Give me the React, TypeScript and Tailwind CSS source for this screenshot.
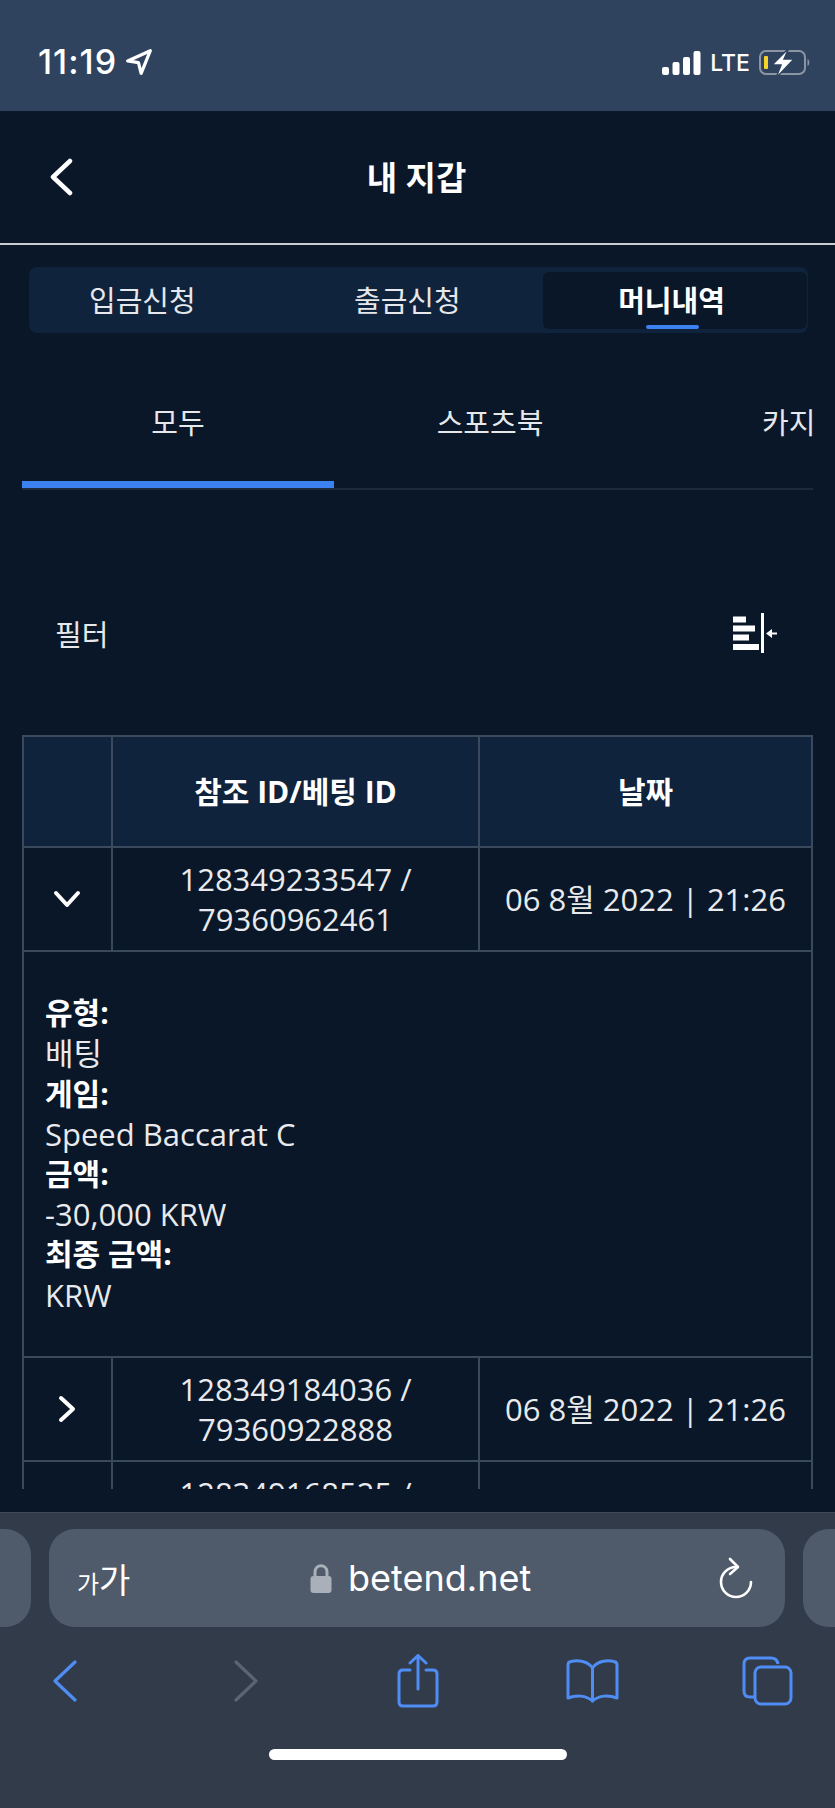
const KR = "font-['Open_Sans','Noto_Sans_CJK_KR',sans-serif]";

function StatusBar() {
  return (
    <div className="flex h-[111px] shrink-0 items-start justify-between bg-[#2f435f] pl-[38px] pr-[24px] pt-[42px] text-white">
      <div className="flex items-center gap-[8px]">
        <span className="font-['Inter',sans-serif] text-[34px] leading-[39px] font-medium tracking-[1px]">11:19</span>
        <svg width="28" height="28" viewBox="0 0 26 26" fill="none" stroke="#fff" strokeWidth="3" strokeLinejoin="round">
          <path d="M2.5 12 L23.5 2.5 L15 23.5 L12.5 13.5 Z" />
        </svg>
      </div>
      <div className="flex items-center gap-[9px] pt-[6px]">
        <svg width="39" height="25" viewBox="0 0 39 25" fill="#fff">
          <rect x="0" y="16" width="7" height="8" rx="2" />
          <rect x="10.5" y="11" width="7" height="13" rx="2" />
          <rect x="21" y="6" width="7" height="18" rx="2" />
          <rect x="31.5" y="0" width="7" height="24" rx="2" />
        </svg>
        <span className="font-['Inter',sans-serif] text-[23px] leading-[26px] font-medium">LTE</span>
        <svg width="52" height="30" viewBox="0 0 52 30" fill="none">
          <rect x="1" y="3" width="45" height="23" rx="6" stroke="#8b95a3" strokeWidth="2" />
          <path d="M48.5 11 C51 12 51 17 48.5 18 Z" fill="#8b95a3" />
          <rect x="5" y="8" width="4" height="13" rx="1" fill="#f5d327" />
          <path d="M30 0 L13 17 L22 17 L17 30 L35 11 L25 11 Z" fill="#fff" stroke="#2f435f" strokeWidth="1.5" />
        </svg>
      </div>
    </div>
  );
}

function WalletHeader() {
  return (
    <div className="grid h-[134px] shrink-0 grid-cols-[1fr_auto_1fr] items-center border-b-[2px] border-[#c9ccd0] pl-[48px]">
      <svg width="26" height="38" viewBox="0 0 26 38" fill="none" stroke="#fff" strokeWidth="4.5" strokeLinecap="round" strokeLinejoin="round">
        <path d="M22 3 L5 19 L22 35" />
      </svg>
      <div className="pr-[50px] pt-[2px] text-[33px] leading-[40px] font-bold text-white">내 지갑</div>
      <div />
    </div>
  );
}

function WalletTabs() {
  return (
    <div className="ml-[29px] mr-[27px] mt-[22px] flex h-[66px] shrink-0 rounded-[8px] bg-[#10233c] pb-[4px] pr-[1px] pt-[5px] text-white">
      <div className="flex w-[265px] items-center pl-[60px] text-[29px] text-[#e6e8eb]">입금신청</div>
      <div className="flex w-[249px] items-center pl-[60px] text-[29px] text-[#e6e8eb]">출금신청</div>
      <div className="relative flex flex-1 items-center justify-center rounded-[6px] bg-[#091729] pr-[7px] text-[29px] font-bold">
        머니내역
        <span className="absolute bottom-0 left-[103px] h-[4px] w-[53px] rounded-[2px] bg-[#3b82f0]" />
      </div>
    </div>
  );
}

function CategoryTabs() {
  return (
    <div className="mx-[22px] mt-[41px] flex h-[116px] shrink-0 overflow-hidden border-b-[2px] border-[#1c2a3c]">
      {["모두", "스포츠북", "카지노"].map((t, i) => (
        <div
          key={t}
          className={`w-[312px] shrink-0 pb-[48px] pt-[30px] text-center text-[29px] leading-[38px] text-[#e6e8eb] ${i === 0 ? "border-b-[7px] border-[#3b82f0]" : ""}`}
        >
          {t}
        </div>
      ))}
    </div>
  );
}

function FilterRow() {
  return (
    <div className="mx-[22px] mt-[125px] flex h-[40px] shrink-0 items-center justify-between pl-[33px] pr-[36px] text-[#e6e8eb]">
      <span className="text-[29px]">필터</span>
      <svg className="mb-[4px]" width="44" height="40" viewBox="0 0 44 40" fill="#fff">
        <rect x="0" y="3.5" width="13" height="6" />
        <rect x="0" y="12.5" width="22" height="6" />
        <rect x="0" y="21.5" width="16" height="6" />
        <rect x="0" y="31" width="26" height="6" />
        <rect x="28" y="0" width="3" height="40" />
        <path d="M33 20.5 L39 16 V19.5 H44 V21.5 H39 V25 Z" />
      </svg>
    </div>
  );
}

function RowCells({ open, refId, betId }: { open: boolean; refId: string; betId: string }) {
  return (
    <tr className="h-[104px]">
      <td className="border-[2px] border-[#3a4a5c] pr-[2px] text-center">
        <svg className="mx-auto block" width="28" height="28" viewBox="0 0 28 28" fill="none" stroke="#fff" strokeWidth="4" strokeLinecap="round" strokeLinejoin="round">
          <path d={open ? "M3 8 L14 20 L25 8" : "M8 3 L20 14 L8 25"} />
        </svg>
      </td>
      <td className="border-[2px] border-[#3a4a5c] text-center text-[31px] leading-[40px]">
        {refId} /<br />
        {betId}
      </td>
      <td className="border-[2px] border-[#3a4a5c] text-center text-[31px]">06 8월 2022 | 21:26</td>
    </tr>
  );
}

const DETAILS = [
  ["유형:", "배팅"],
  ["게임:", "Speed Baccarat C"],
  ["금액:", "-30,000 KRW"],
  ["최종 금액:", "KRW"],
];

function HistoryTable() {
  return (
    <div className="mx-[22px] mt-[80px] h-[754px] shrink-0 overflow-hidden">
      <table className="w-full table-fixed border-collapse text-[30px] text-[#e8eaed]">
        <colgroup>
          <col className="w-[89px]" />
          <col className="w-[367px]" />
          <col />
        </colgroup>
        <tbody>
          <tr className="h-[111px] bg-[#10233c] font-bold text-white">
            <td className="border-[2px] border-[#3a4a5c]" />
            <td className="border-[2px] border-[#3a4a5c] text-center">참조 ID/베팅 ID</td>
            <td className="border-[2px] border-[#3a4a5c] text-center">날짜</td>
          </tr>
          <RowCells open refId="128349233547" betId="79360962461" />
          <tr>
            <td colSpan={3} className="h-[406px] border-[2px] border-[#3a4a5c] pl-[21px] leading-[40.2px]">
              {DETAILS.map(([k, v]) => (
                <div key={k}>
                  <div className="font-bold text-white">{k}</div>
                  <div className="text-[31px]">{v}</div>
                </div>
              ))}
            </td>
          </tr>
          <RowCells open={false} refId="128349184036" betId="79360922888" />
          <RowCells open={false} refId="128349168525" betId="79360911024" />
        </tbody>
      </table>
    </div>
  );
}

function BrowserBar() {
  return (
    <div className="mt-auto flex h-[296px] shrink-0 flex-col border-t-[1px] border-[#3f4a59] bg-[#313b4a]">
      <div className="mt-[16px] flex h-[98px] shrink-0 gap-[18px] overflow-hidden">
        <div className="ml-[-40px] w-[71px] shrink-0 rounded-[26px] bg-[#4f5b6a]" />
        <div className="flex w-[736px] shrink-0 items-center rounded-[26px] bg-[#4f5b6a] pl-[28px] pr-[32px] text-white">
          <span className="flex w-[60px] shrink-0 items-baseline font-['Noto_Sans_CJK_KR',sans-serif]">
            <span className="text-[24px]">가</span>
            <span className="text-[34px]">가</span>
          </span>
          <span className="ml-[173px] flex items-center gap-[16px]">
            <svg width="22" height="29" viewBox="0 0 22 29" fill="none">
              <path d="M5 13 V8 C5 -0.5 17 -0.5 17 8 V13" stroke="#aab0b9" strokeWidth="3" />
              <rect x="0.5" y="12" width="21" height="17" rx="3" fill="#aab0b9" />
            </svg>
            <span className="font-['Inter',sans-serif] text-[36px] leading-[40px]">betend.net</span>
          </span>
          <svg className="ml-auto" width="34" height="42" viewBox="0 0 34 42" fill="none" stroke="#fff" strokeWidth="2.6" strokeLinecap="round" strokeLinejoin="round">
            <path d="M17 10 A15 15 0 1 0 32 25" />
            <path d="M11 2 L19 10 L11 17" />
          </svg>
        </div>
        <div className="w-[60px] shrink-0 rounded-[26px] bg-[#4f5b6a]" />
      </div>
      <div className="mt-[27px] flex h-[54px] shrink-0 items-center pl-[53px]">
        <svg width="24" height="42" viewBox="0 0 24 42" fill="none" stroke="#4f8df5" strokeWidth="3.2" strokeLinecap="round" strokeLinejoin="round">
          <path d="M22 2 L2 21 L22 40" />
        </svg>
        <svg className="ml-[157px]" width="24" height="42" viewBox="0 0 24 42" fill="none" stroke="#5b6471" strokeWidth="3.2" strokeLinecap="round" strokeLinejoin="round">
          <path d="M2 2 L22 21 L2 40" />
        </svg>
        <svg className="ml-[139px]" width="42" height="54" viewBox="0 0 42 54" fill="none" stroke="#4f8df5" strokeWidth="3" strokeLinecap="round" strokeLinejoin="round">
          <path d="M13 16 H6 Q2 16 2 20 V48 Q2 52 6 52 H36 Q40 52 40 48 V20 Q40 16 36 16 H29" />
          <path d="M21 35 V2" />
          <path d="M13 9 L21 1.5 L29 9" />
        </svg>
        <svg className="ml-[127px]" width="53" height="44" viewBox="0 0 53 44" fill="none" stroke="#4f8df5" strokeWidth="3" strokeLinecap="round" strokeLinejoin="round">
          <path d="M26.5 9 C22 2 12 1 5 2.5 Q2 3 2 6 V39 C10 36 20 36 26.5 42 C33 36 43 36 51 39 V6 Q51 3 48 2.5 C41 1 31 2 26.5 9 Z" />
          <path d="M26.5 9 V42" />
        </svg>
        <svg className="ml-[123px]" width="51" height="50" viewBox="0 0 51 50" fill="none" stroke="#4f8df5" strokeWidth="3" strokeLinejoin="round">
          <path d="M13 41 H8 Q2 41 2 35 V8 Q2 2 8 2 H29 Q35 2 36 8" />
          <rect x="13" y="11" width="36" height="37" rx="6" />
        </svg>
      </div>
      <div className="mx-auto mt-[41px] h-[11px] w-[298px] rounded-full bg-white" />
    </div>
  );
}

export default function App() {
  return (
    <div className={`flex h-[1808px] w-[835px] flex-col overflow-hidden bg-[#091729] ${KR}`}>
      <StatusBar />
      <WalletHeader />
      <WalletTabs />
      <CategoryTabs />
      <FilterRow />
      <HistoryTable />
      <BrowserBar />
    </div>
  );
}
